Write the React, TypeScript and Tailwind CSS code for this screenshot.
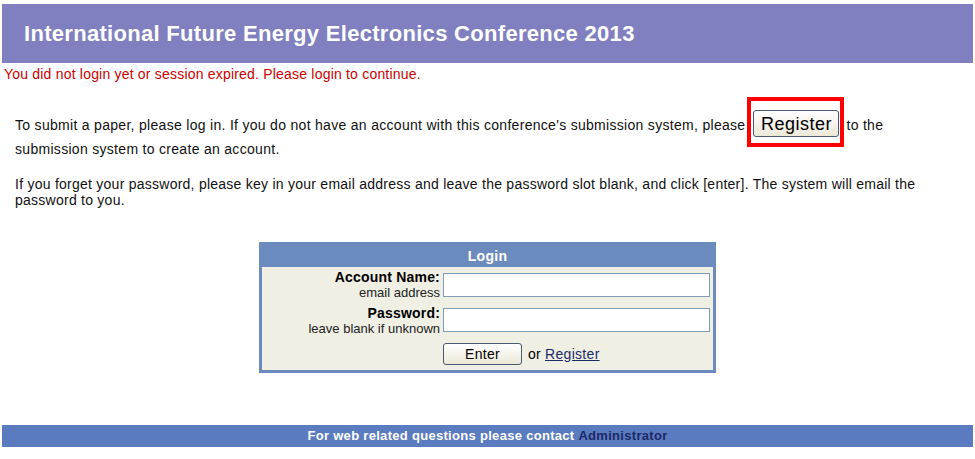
import React from "react";

export default function App() {
  return (
    <div className="w-[975px] h-[459px] bg-white overflow-hidden font-['Liberation_Sans',Arial,sans-serif] text-black">
      <div className="pt-[4px] px-[2px]">
        <div className="h-[59px] bg-[#8080c0] flex items-center pl-[22px]">
          <h1 className="text-white font-bold text-[22px] leading-none tracking-[0.3px]">
            International Future Energy Electronics Conference 2013
          </h1>
        </div>
      </div>
      <div className="pl-[4px] pt-[3px] text-[14px] leading-[16px] tracking-[0.2px] text-[#cc0000]">
        You did not login yet or session expired. Please login to continue.
      </div>

      <div className="pl-[15px] pr-[30px] pt-[31px] text-[14px] tracking-[0.3px] text-[#111]">
        <p className="leading-[24px]">
          To submit a paper, please log in. If you do not have an account with this conference's submission system, please
          <span className="relative inline-block align-middle h-[20px] w-[86px] ml-[8px] mr-[7px]">
            <span className="absolute left-0 -top-[6px] w-[86px] h-[27px]">
              <button className="block h-[27px] w-[86px] rounded-[3px] border border-[#4a5a72] bg-gradient-to-b from-white to-[#ece9d8] text-[18px] tracking-[0.5px] leading-none text-black">
                Register
              </button>
              <span className="absolute -top-[13px] -bottom-[10px] -left-[6px] -right-[5px] border-[4px] border-[#ff0000] pointer-events-none"></span>
            </span>
          </span>
          to the submission system to create an account.
        </p>
        <p className="mt-[15px] leading-[16px] tracking-[0.25px]">
          If you forget your password, please key in your email address and leave the password slot blank, and click [enter]. The system will email the password to you.
        </p>
      </div>

      <div className="flex justify-center pt-[34px]">
        <div className="w-[457px] border-[3px] border-[#6b8bbf] bg-[#efefe4]">
          <div className="h-[22px] bg-[#6b8bbf] flex items-center justify-center text-white font-bold text-[14px] tracking-[0.3px]">
            Login
          </div>
          <div className="grid grid-cols-[178px_1fr] gap-x-[3px] pr-[3px]">
            <div className="text-right flex flex-col justify-center h-[35px]">
              <div className="font-bold text-[14px] leading-[17px] tracking-[0.2px]">Account Name:</div>
              <div className="text-[13px] leading-[14px] text-[#222]">email address</div>
            </div>
            <div className="flex items-center h-[35px]">
              <input className="w-[267px] h-[24px] border border-[#7f9db9] bg-white outline-none" />
            </div>
            <div className="text-right flex flex-col justify-center h-[36px]">
              <div className="font-bold text-[14px] leading-[17px] tracking-[0.2px]">Password:</div>
              <div className="text-[13px] leading-[14px] text-[#222]">leave blank if unknown</div>
            </div>
            <div className="flex items-center h-[36px]">
              <input className="w-[267px] h-[24px] border border-[#7f9db9] bg-white outline-none" />
            </div>
            <div></div>
            <div className="flex items-center h-[32px] text-[14px] tracking-[0.3px]">
              <button className="w-[79px] h-[22px] rounded-[3px] border border-[#4a5a72] bg-gradient-to-b from-white to-[#ece9d8] text-[14px] leading-none">
                Enter
              </button>
              <span className="ml-[6px]">or</span>
              <a className="ml-[4px] underline text-[#1a2a6a] cursor-pointer">Register</a>
            </div>
          </div>
        </div>
      </div>

      <div className="px-[2px] pt-[52px]">
        <div className="h-[22px] bg-[#5b7bc0] flex items-center justify-center text-[13px] tracking-[0.3px] font-bold text-white">
          For web related questions please contact&nbsp;<span className="text-[#1a2a66]">Administrator</span>
        </div>
      </div>
    </div>
  );
}
